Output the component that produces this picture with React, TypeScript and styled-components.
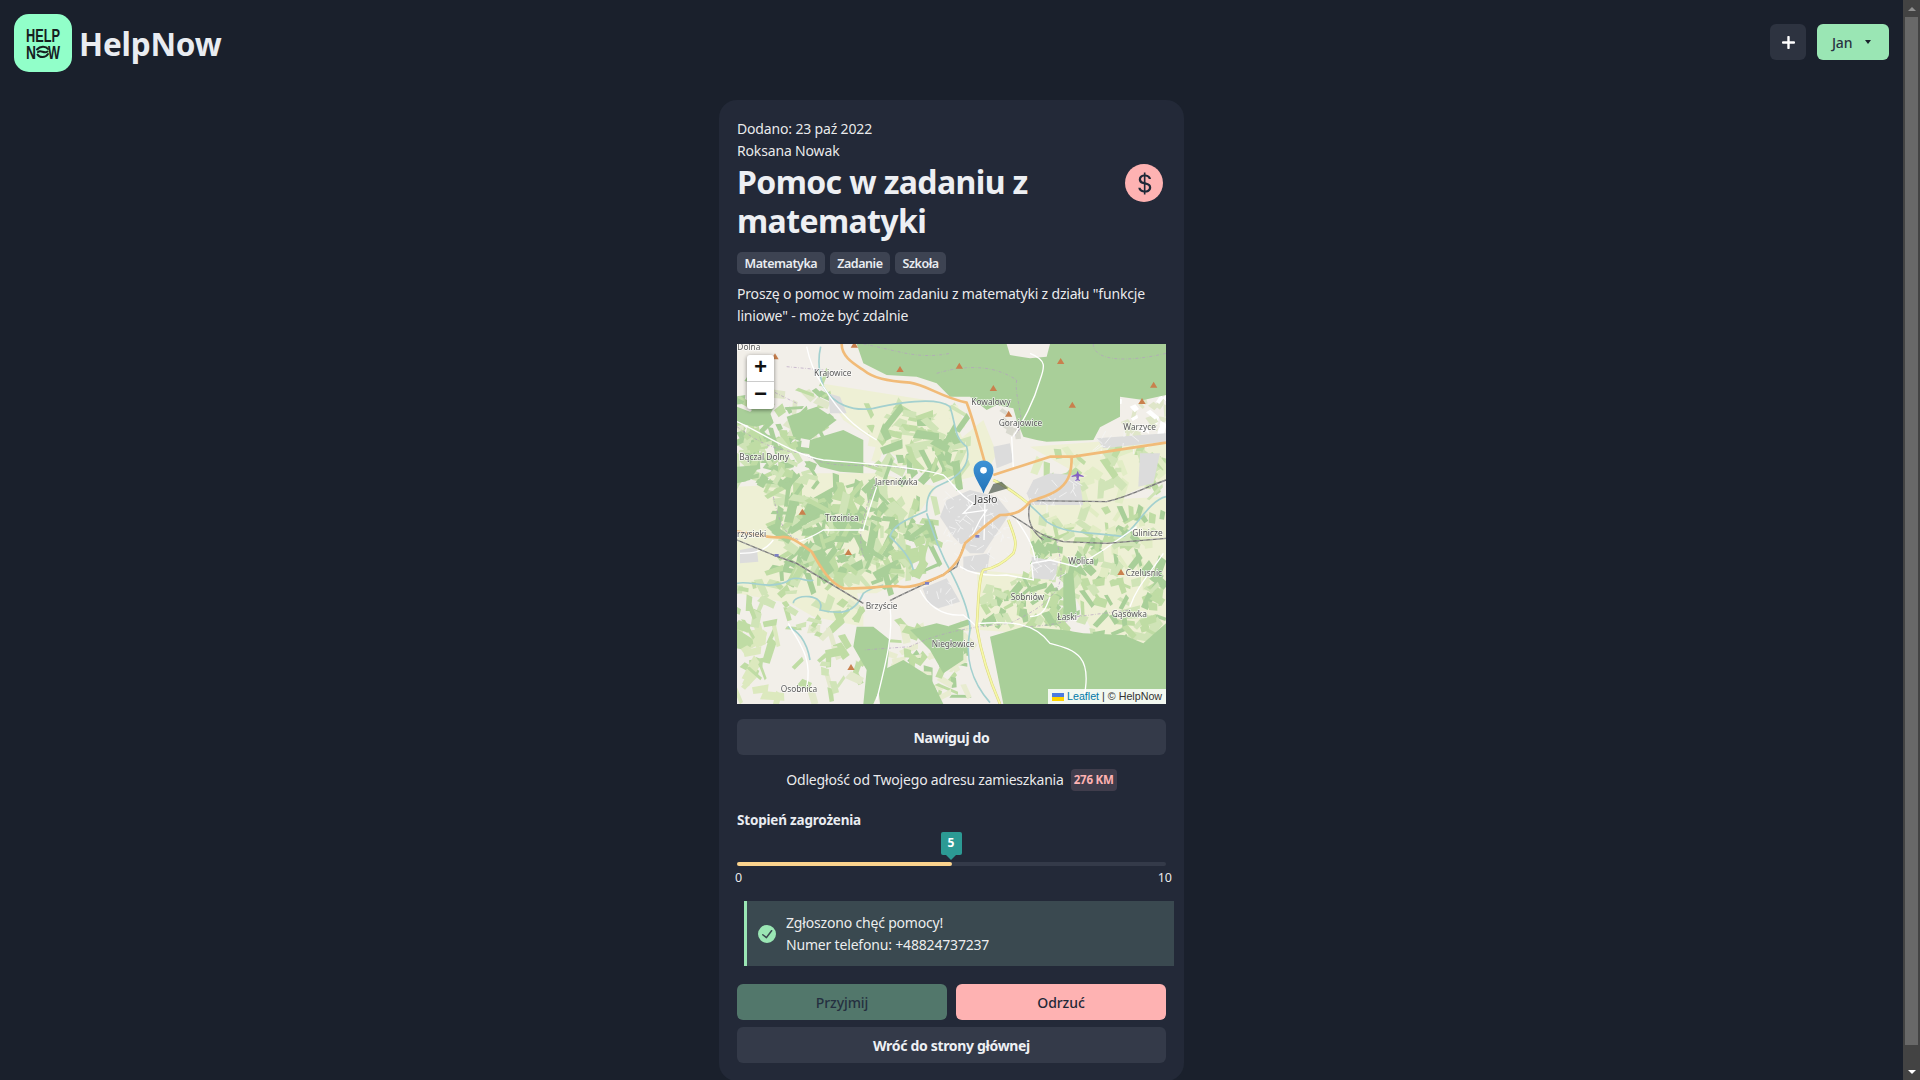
import React, { useMemo } from "react";
import styled, { createGlobalStyle } from "styled-components";
import { BsCurrencyDollar } from "react-icons/bs";

const FONT = `"Noto Sans", "Open Sans", sans-serif`;

const Global = createGlobalStyle`
  html, body { margin: 0; height: 100%; overflow: hidden; background: #1a202c; }
  body { color: rgba(255,255,255,.92); font-family: ${FONT}; font-size: 14px; line-height: 22px; }
`;

const Shell = styled.div`display: flex; height: 100vh; overflow: hidden;`;
const Page = styled.div`flex: 1; min-width: 0; display: block;`;
const ScrollTrack = styled.div`flex: none; width: 17px; height: 100%; background: #434343; display: flex; flex-direction: column; align-items: center;`;
const ScrollArrow = styled.div`flex: none; height: 17px; display: flex; align-items: center; justify-content: center;`;
const UpArrow = styled.span`width: 0; height: 0; border-left: 4px solid transparent; border-right: 4px solid transparent; border-bottom: 4px solid #8f8f8f;`;
const DownArrow = styled.span`width: 0; height: 0; border-left: 4px solid transparent; border-right: 4px solid transparent; border-top: 4px solid #fff;`;
const ScrollThumb = styled.div`flex: none; width: 13px; height: 1028px; background: #686868;`;
const ScrollRest = styled.div`flex: 1;`;

const Header = styled.header`display: flex; align-items: center; justify-content: space-between; height: 86px; padding: 0 14px; box-sizing: border-box;`;
const Brand = styled.div`display: flex; align-items: center; gap: 7px;`;
const BrandName = styled.div`font-size: 31.5px; font-weight: 700; line-height: 40px; color: #e9ecf1; padding-top: 2px; letter-spacing: -0.2px;`;
const Actions = styled.div`display: flex; gap: 11px; margin-top: -2px;`;
const IconButton = styled.button`width: 36px; height: 36px; border: 0; border-radius: 6px; background: #2d3340; color: #fff; display: flex; align-items: center; justify-content: center; padding: 0;`;
const MenuButton = styled.button`width: 72px; height: 36px; border: 0; border-radius: 6px; background: #9ae6b4; color: #2a3342; font: 500 14px ${FONT}; letter-spacing: -0.2px; display: flex; align-items: center; gap: 13px; padding: 0 0 0 15px;`;
const Caret = styled.span`width: 0; height: 0; border-left: 3.5px solid transparent; border-right: 3.5px solid transparent; border-top: 4px solid #1a202c;`;
const Main = styled.main`display: flex; justify-content: center; padding: 14px 0 18px;`;
const Card = styled.section`width: 465px; box-sizing: border-box; background: #232938; border-radius: 18px; padding: 18px;`;
const Line = styled.div`height: 22px; white-space: nowrap; letter-spacing: -0.16px;`;
const TitleRow = styled.div`display: flex; justify-content: space-between; align-items: flex-start; padding-right: 3px;`;
const Title = styled.h1`margin: 0; width: 330px; font-size: 32px; line-height: 39px; font-weight: 700; color: #edeff3; letter-spacing: -0.62px;`;
const MoneyBadge = styled.div`width: 38px; height: 38px; margin-top: 2px; border-radius: 50%; background: #feb2b2; color: #1f2837; display: flex; align-items: center; justify-content: center; font-size: 25px;`;
const Tags = styled.div`display: flex; gap: 5px; margin-top: 12px;`;
const Tag = styled.span`height: 22px; padding: 0 7.5px; border-radius: 5px; background: #3d4352; color: #e9ecf1; font-size: 12.5px; font-weight: 600; line-height: 23px; letter-spacing: -0.45px;`;
const Description = styled.p`margin: 9px 0 0; letter-spacing: -0.18px;`;
const MapBox = styled.div`position: relative; height: 360px; margin-top: 17px; overflow: hidden; background: #f2efe9;`;
const MapArt = styled.svg`display: block; width: 429px; height: 360px;`;
const Zoom = styled.div`position: absolute; left: 10px; top: 11px; width: 27px; background: #fff; border-radius: 3px; box-shadow: 0 1px 4px rgba(0,0,0,.45); overflow: hidden;`;
const ZoomBtn = styled.div`height: 27px; box-sizing: border-box; display: flex; align-items: center; justify-content: center; color: #111; font: 700 22px "Liberation Mono", monospace; &:first-child { border-bottom: 1px solid #ccc; }`;
const Attribution = styled.div`position: absolute; right: 0; bottom: 0; height: 15px; width: 118px; box-sizing: border-box; background: rgba(255,255,255,.85); color: #333; font: 10.7px/15px "Liberation Sans", Arial, sans-serif; padding-left: 4px; display: flex; align-items: center; gap: 3px; white-space: nowrap;`;
const AttrLink = styled.span`color: #0078a8;`;
const Pin = styled.svg`position: absolute; left: 236px; top: 116px; width: 21px; height: 34px;`;
const GhostButton = styled.button<{ $mt: number }>`display: block; width: 100%; height: 36px; margin-top: ${(p) => p.$mt}px; border: 0; border-radius: 6px; background: #343a49; color: #eef0f4; font: 700 14px ${FONT}; letter-spacing: -0.32px;`;
const Distance = styled.div`display: flex; justify-content: center; align-items: center; gap: 7px; height: 22px; margin-top: 14px; letter-spacing: -0.2px;`;
const KmBadge = styled.span`height: 22px; width: 46px; text-align: center; border-radius: 4px; background: #403d4c; color: #feb2b2; font-size: 11.5px; font-weight: 700; letter-spacing: -0.2px;`;
const Label = styled.div`margin-top: 18px; font-weight: 700; font-size: 13.5px; color: #e9ecf1; letter-spacing: -0.2px;`;
const Slider = styled.div`position: relative; margin-top: 31px; height: 4px; border-radius: 2px; background: #343a49;`;
const SliderFill = styled.div`height: 100%; border-radius: 2px; background: #fbd38d;`;
const Bubble = styled.div`position: absolute; left: 50%; top: -30px; width: 21px; height: 23px; margin-left: -11px; background: #2c9a94; border-radius: 2px; color: #fff; text-align: center; font-size: 12px; font-weight: 700; line-height: 22px;
  &::after { content: ""; position: absolute; left: 5px; top: 23px; border: 5px solid transparent; border-top: 5px solid #2c9a94; border-bottom: 0; }`;
const Scale = styled.div`display: flex; justify-content: space-between; margin: 4px -6px 0 -2px; height: 16px; font-size: 12.5px; line-height: 16px;`;
const Alert = styled.div`display: flex; align-items: center; gap: 10px; width: 430px; box-sizing: border-box; height: 65px; margin: 15px 0 0 7px; padding-left: 11px; border-left: 3px solid #9ae6b4; background: #3a4950;`;
const AlertIcon = styled.svg`width: 18px; height: 18px; flex: none; color: #9ae6b4;`;
const AlertText = styled.div`letter-spacing: -0.18px;`;
const ButtonRow = styled.div`display: grid; grid-template-columns: 1fr 1fr; gap: 9px; margin-top: 18px;`;
const Accept = styled.button`height: 36px; border: 0; border-radius: 6px; background: #52776b; color: #253040; font: 500 14px ${FONT}; letter-spacing: -0.1px;`;
const Reject = styled.button`height: 36px; border: 0; border-radius: 6px; background: #feb2b2; color: #1f2837; font: 500 14px ${FONT}; letter-spacing: -0.1px;`;

const LogoMark = () => (
  <svg width="58" height="58" viewBox="0 0 58 58">
    <rect width="58" height="58" rx="15" fill="#91ffc9" />
    <text x="12" y="27.5" fontFamily="Liberation Sans, sans-serif" fontWeight="700" fontSize="19" textLength="34" lengthAdjust="spacingAndGlyphs" fill="#16201f">HELP</text>
    <text x="12" y="44.5" fontFamily="Liberation Sans, sans-serif" fontWeight="700" fontSize="19" textLength="10" lengthAdjust="spacingAndGlyphs" fill="#16201f">N</text>
    <text x="34" y="44.5" fontFamily="Liberation Sans, sans-serif" fontWeight="700" fontSize="19" textLength="12" lengthAdjust="spacingAndGlyphs" fill="#16201f">W</text>
    <path d="M23 35.5c3-3.500 9-3.500 11-.5M23.5 40.5c2 3.500 8 3.500 10.500-.5M24 38c3-2.500 6 2 9.500-.5" fill="none" stroke="#16201f" strokeWidth="2" strokeLinecap="round" />
  </svg>
);

function rng(seed: number) {
  let s = seed;
  return () => {
    s = (s * 16807) % 2147483647;
    return (s - 1) / 2147483646;
  };
}

type Field = { d: string; fill: string };
function fields(x0: number, y0: number, x1: number, y1: number, n: number, seed: number, palette: string[], lo = 12, hi = 46): Field[] {
  const r = rng(seed);
  const out: Field[] = [];
  for (let i = 0; i < n; i++) {
    const cx = x0 + r() * (x1 - x0);
    const cy = y0 + r() * (y1 - y0);
    const a = r() * Math.PI;
    const l = lo + r() * (hi - lo);
    const w = 5 + r() * 11;
    const ux = Math.cos(a), uy = Math.sin(a);
    const p = [
      [cx - ux * l - uy * w, cy - uy * l + ux * w],
      [cx + ux * l - uy * w * 0.6, cy + uy * l + ux * w * 0.6],
      [cx + ux * l * 0.9 + uy * w, cy + uy * l * 0.9 - ux * w],
      [cx - ux * l * 0.8 + uy * w * 0.8, cy - uy * l * 0.8 - ux * w * 0.8],
    ];
    out.push({ d: "M" + p.map((q) => q[0].toFixed(0) + "," + q[1].toFixed(0)).join("L") + "Z", fill: palette[Math.floor(r() * palette.length)] });
  }
  return out;
}

function streets(x0: number, y0: number, x1: number, y1: number, n: number, seed: number): string {
  const r = rng(seed);
  let d = "";
  for (let i = 0; i < n; i++) {
    const x = x0 + r() * (x1 - x0), y = y0 + r() * (y1 - y0);
    d += `M${x.toFixed(0)},${y.toFixed(0)}l${(r() * 50 - 25).toFixed(0)},${(r() * 50 - 25).toFixed(0)}`;
  }
  return d;
}

const G = "#a9cf99", G2 = "#bfdca4", F = "#eef0d5", M = "#d0e4b7";

const forests = [
  "M380,12L1308,12L1308,165L1240,180L1170,170L1170,230L1110,262L1090,300L950,305L920,300L880,290L860,240L850,205L800,195L770,210L720,170L660,170L620,130L560,110L470,105L400,70Z",
  "M240,300L340,270L400,300L400,400L330,395L270,380L235,340Z",
  "M780,890L880,860L1000,870L1060,880L1180,885L1240,910L1308,850L1308,1092L820,1092Z",
  "M380,860L430,860L480,900L470,1000L430,1092L400,1092L410,990L370,920Z",
  "M21,200L60,215L110,190L130,245L80,260L21,250Z",
  "M21,380L90,375L60,420L21,430Z",
  "M540,870L620,850L700,870L700,960L640,1000L600,930Z",
  "M170,230L260,200L320,240L240,300L190,290Z",
  "M440,1000L520,960L600,1010L640,1092L450,1092Z",
  "M1000,700L1030,700L1040,820L1000,840Z",
];
const farms = [
  "M21,440L240,430L300,760L400,800L400,860L250,830L180,790L21,760Z",
  "M270,130L650,190L700,300L710,400L620,420L540,380L430,300L340,240Z",
  "M120,400L440,400L620,440L540,560L520,640L550,700L440,760L320,760L240,660L150,600Z",
  "M900,320L1308,290L1308,420L1240,440L1130,490L1060,490L1040,400Z",
  "M900,490L1308,470L1308,740L1180,820L1000,720L900,640Z",
  "M740,690L960,710L1000,880L880,880L750,870Z",
  "M240,720L380,750L390,810L300,800Z",
  "M1020,740L1308,700L1308,860L1240,920L1100,900Z",
  "M640,340L760,240L800,340L770,400L650,430Z",
];
const greys = [
  "M650,480L720,450L800,470L840,520L800,580L760,640L720,640L670,590L630,530Z",
  "M578,745L650,715L690,785L625,805L595,790Z",
  "M910,420L960,400L1030,405L1050,430L1060,495L905,495L890,460Z",
  "M1100,295L1308,280L1308,305L1120,325Z",
  "M1230,340L1290,340L1270,430L1225,440Z",
  "M790,320L840,310L850,365L800,385Z",
  "M905,650L985,665L975,720L905,715Z",
  "M300,220L350,220L330,170L295,160Z",
  "M30,630L80,620L85,665L30,670Z",
  "M700,650L780,640L770,700L700,690Z",
];
const whiteRoads = [
  "M21,245C100,280 180,340 280,360C400,370 560,380 640,405C670,430 680,460 730,490L700,520L770,510L750,540L720,600",
  "M765,480L762,600",
  "M845,290L850,385M850,290C880,240 910,190 930,120C945,80 950,60 900,40",
  "M280,140C330,220 370,260 440,300",
  "M440,440C420,500 400,560 400,570L280,570C240,595 220,600 205,605",
  "M690,680C720,700 760,710 830,705L910,720L905,670L960,660L1040,680L1120,630L1220,560",
  "M570,750C590,790 630,830 700,825C720,840 730,850 740,860",
  "M175,850C200,900 250,950 230,1040",
  "M480,800C490,880 470,960 440,1080",
  "M740,850C800,850 900,830 960,910C1040,930 1090,950 1060,1080",
  "M960,770C950,800 940,830 900,830M1300,640C1260,700 1220,740 1200,800",
  "M860,540C880,570 910,610 915,660",
  "M130,600C100,640 60,640 30,640",
  "M230,20C240,70 260,110 280,140",
];
const admin = [
  "M21,260C90,310 130,330 220,340C300,400 420,360 540,390M430,440C400,540 380,570 400,650",
  "M130,470C150,560 170,590 210,600",
  "M620,100C720,70 800,80 860,120M860,120C850,180 900,250 850,290",
  "M400,12C500,30 560,60 660,40M1090,12C1090,60 1180,70 1308,40",
  "M980,600C1000,690 1000,740 960,770C940,800 880,830 840,850C720,860 620,880 540,920L400,930",
  "M1040,830L1200,810M880,860C960,860 1040,840 1060,820",
  "M170,80L280,90M60,120L200,190",
];
const rivers = [
  "M272,20C260,70 270,110 280,140C310,195 370,215 430,205C520,185 620,170 660,200C680,260 670,290 710,320C725,370 690,410 630,435C590,450 590,490 590,512C540,535 490,550 480,590C510,620 540,650 550,690",
  "M590,520C610,580 630,640 670,710C700,770 720,830 720,870C705,950 720,1020 780,1088",
  "M800,422C850,450 910,500 950,545C1010,585 1080,575 1180,590C1220,560 1260,480 1308,470",
  "M21,730C60,720 110,750 170,725C200,700 230,730 250,720",
  "M190,790C190,760 290,760 270,810C320,820 370,830 400,760C420,745 440,740 460,735",
  "M175,860C200,870 230,900 240,960",
];
const peaks: number[][] = [[373,15],[135,50],[510,88],[688,78],[790,145],[992,64],[1271,135],[1236,184],[1027,195],[836,222],[217,516],[355,637],[1173,697],[363,982]];
const labels: [number, number, string][] = [
  [22, 30, "Dolna"], [252, 108, "Krajowice"], [724, 194, "Kowalowy"], [806, 258, "Gorajowice"], [1180, 271, "Warzyce"],
  [28, 360, "Bączal Dolny"], [435, 436, "Jareniówka"], [285, 544, "Trzcinica"], [21, 590, "rzysieki"], [1207, 587, "Glinicze"],
  [1015, 672, "Wolica"], [1187, 707, "Czelusnic"], [842, 781, "Sobniów"], [982, 839, "Łaski"], [1145, 830, "Gąsówka"],
  [407, 808, "Brzyście"], [605, 921, "Niegłowice"], [152, 1056, "Osobnica"],
];
const YELLOW = "M790,420C830,440 870,470 900,495M835,540C850,580 865,610 850,640C820,670 790,685 760,690C745,710 745,800 740,860C750,920 770,1000 810,1092";
const RAIL = "M21,600L130,645L200,670L400,790M480,782C540,750 620,720 680,680L700,620M840,525C880,540 920,590 1000,605L1130,610L1308,595M900,490C890,530 900,570 940,600M905,482L1130,485C1200,470 1250,440 1308,420";

const TerrainMap = () => {
  const patches = useMemo(() => {
    const g = [G, G, G2, M];
    return [
      ...fields(130, 430, 500, 730, 190, 11, g),
      ...fields(420, 210, 700, 420, 100, 23, [G2, M, G, F]),
      ...fields(21, 270, 250, 440, 70, 37, [G, G2, M], 10, 34),
      ...fields(21, 110, 300, 290, 46, 41, [G2, "#dfe6c9", G], 10, 30),
      ...fields(500, 470, 620, 700, 40, 53, [G, G2, M]),
      ...fields(910, 510, 1300, 730, 100, 67, [M, G2, "#e1ecc4", G], 10, 34),
      ...fields(920, 330, 1300, 470, 46, 71, [M, "#e2edc6", G2], 10, 40),
      ...fields(760, 710, 1000, 860, 70, 83, [G, G2, M], 10, 30),
      ...fields(1000, 720, 1300, 900, 60, 97, [G2, G, M], 10, 36),
      ...fields(1170, 170, 1308, 290, 30, 101, ["#f2efe9", "#ffffff", "#dfe6c9"], 10, 26),
      ...fields(21, 860, 140, 1090, 26, 113, [G2, "#dce9be"], 14, 40),
      ...fields(480, 850, 720, 1090, 60, 127, [G, G2, "#e8ecd0"], 12, 40),
      ...fields(190, 780, 400, 1080, 40, 139, ["#e3e9cc", G2, M], 10, 30),
      ...fields(820, 200, 900, 300, 12, 149, ["#d9d9cf", "#f2efe9"], 8, 20),
      ...fields(21, 720, 200, 860, 22, 157, [G2, M], 10, 28),
    ];
  }, []);
  const town = useMemo(() => streets(640, 460, 840, 690, 70, 5) + streets(580, 720, 690, 800, 10, 9) + streets(900, 410, 1060, 500, 18, 13) + streets(1100, 285, 1300, 330, 14, 17) + streets(905, 650, 985, 720, 14, 19), []);
  return (
    <MapArt viewBox="21 12 1287 1080" preserveAspectRatio="none">
      <defs>
        <filter id="tile" x="0" y="0" width="100%" height="100%"><feGaussianBlur stdDeviation="1.7" /></filter>
        <filter id="soft" x="-50%" y="-50%" width="200%" height="200%"><feGaussianBlur stdDeviation="0.7" /></filter>
      </defs>
      <g filter="url(#tile)">
        <rect x="21" y="12" width="1287" height="1080" fill="#f2efe9" />
        {farms.map((d, i) => <path key={i} d={d} fill={F} />)}
        {patches.map((p, i) => <path key={i} d={p.d} fill={p.fill} />)}
        {forests.map((d, i) => <path key={i} d={d} fill={G} />)}
        <path d="M830,12L960,12L950,50L900,55L840,45Z" fill="#f2efe9" />
        {greys.map((d, i) => <path key={i} d={d} fill="#dcdcdc" />)}
        <path d={town} stroke="#f4f4f4" strokeWidth="2.500" fill="none" />
        <g fill="none" stroke="#b39fc0" strokeWidth="2" strokeDasharray="9 5 2 5">{admin.map((d, i) => <path key={i} d={d} />)}</g>
        <g fill="none" stroke="#a3d0cf" strokeWidth="5">{rivers.map((d, i) => <path key={i} d={d} />)}</g>
        <g fill="none" stroke="#fff" strokeWidth="4">{whiteRoads.map((d, i) => <path key={i} d={d} />)}</g>
        <g fill="none" strokeLinejoin="round">
          <path d={YELLOW} stroke="#d9d77f" strokeWidth="8" />
          <path d={YELLOW} stroke="#f6f8a8" strokeWidth="5" />
          <path d={RAIL} stroke="#777" strokeWidth="4" />
          <path d={RAIL} stroke="#ddd" strokeWidth="1.500" strokeDasharray="10 10" />
          <g stroke="#f1bb78" strokeWidth="8">
            <path d="M335,12C335,50 370,70 400,90C430,115 470,122 540,128C590,135 630,170 710,188C730,240 745,300 765,370" />
            <path d="M790,405L960,350L1030,350L1308,308" />
            <path d="M1025,350C1025,390 1020,420 990,445C960,470 920,475 900,485C880,510 860,525 810,525C770,550 730,590 705,610C695,640 690,665 640,705C590,725 540,750 500,738C440,740 380,748 340,745C300,730 270,680 245,635C210,610 180,585 150,592C110,595 60,580 21,575" />
          </g>
        </g>
        <g fill="#7d7fc4"><rect x="134" y="642" width="12" height="8" /><rect x="585" y="726" width="12" height="8" /><rect x="736" y="585" width="12" height="8" /></g>
        <g fill="#c9804e">{peaks.map(([x, y], i) => <path key={i} d={`M${x},${y - 10}l11,18h-22Z`} />)}</g>
        <path d="M1043,392l4,10l14,6v3l-14,-2l-1,9l4,3v2l-7,-2l-7,2v-2l4,-3l-1,-9l-14,2v-3l14,-6Z" fill="#8461c4" />
        <path d="M790,432L815,425L835,445L775,462Z" fill="#4d5a4c" opacity=".7" />
      </g>
      <g filter="url(#soft)" fontFamily="Noto Sans, sans-serif" fontSize="25" fill="#5a5a5a" stroke="#fff" strokeOpacity=".75" strokeWidth="4" paintOrder="stroke">
        {labels.map(([x, y, t]) => <text key={t} x={x} y={y}>{t}</text>)}
        <text x="733" y="490" fontSize="32" fill="#444">Jasło</text>
      </g>
    </MapArt>
  );
};

const CheckCircle = () => (
  <AlertIcon viewBox="0 0 24 24">
    <path fill="currentColor" d="M12,0A12,12,0,1,0,24,12,12.014,12.014,0,0,0,12,0Zm6.927,8.2-6.845,9.289a1.011,1.011,0,0,1-1.43.188L5.764,13.769a1,1,0,1,1,1.25-1.562l4.076,3.261,6.227-8.451A1,1,0,1,1,18.927,8.2Z" />
  </AlertIcon>
);

export default function App() {
  return (
    <Shell>
      <Global />
      <Page>
        <Header>
          <Brand>
            <LogoMark />
            <BrandName>HelpNow</BrandName>
          </Brand>
          <Actions>
            <IconButton aria-label="Dodaj">
              <svg width="13" height="13" viewBox="0 0 13 13"><path d="M6.500 1v11M1 6.500h11" stroke="#fff" strokeWidth="2.400" strokeLinecap="round" /></svg>
            </IconButton>
            <MenuButton>Jan<Caret /></MenuButton>
          </Actions>
        </Header>
        <Main>
          <Card>
            <Line>Dodano: 23 paź 2022</Line>
            <Line>Roksana Nowak</Line>
            <TitleRow>
              <Title>Pomoc w zadaniu z matematyki</Title>
              <MoneyBadge><BsCurrencyDollar /></MoneyBadge>
            </TitleRow>
            <Tags>
              <Tag>Matematyka</Tag>
              <Tag>Zadanie</Tag>
              <Tag>Szkoła</Tag>
            </Tags>
            <Description>Proszę o pomoc w moim zadaniu z matematyki z działu "funkcje liniowe" - może być zdalnie</Description>
            <MapBox>
              <TerrainMap />
              <Pin viewBox="0 0 25 41">
                <defs>
                  <linearGradient id="pin" x1="0" y1="0" x2="0" y2="1"><stop offset="0" stopColor="#3f93d6" /><stop offset="1" stopColor="#2273b8" /></linearGradient>
                </defs>
                <path d="M12.500 0.500C5.800 0.500 0.500 5.800 0.500 12.500C0.500 21 10 32 12.500 40.500C15 32 24.500 21 24.500 12.500C24.500 5.800 19.200 0.500 12.500 0.500Z" fill="url(#pin)" />
                <circle cx="12.500" cy="12.500" r="4" fill="#fff" />
              </Pin>
              <Zoom>
                <ZoomBtn>+</ZoomBtn>
                <ZoomBtn>−</ZoomBtn>
              </Zoom>
              <Attribution>
                <svg width="12" height="8" viewBox="0 0 12 8"><rect width="12" height="4" fill="#4c7be1" /><rect y="4" width="12" height="4" fill="#ffd500" /></svg>
                <AttrLink>Leaflet</AttrLink> | © HelpNow
              </Attribution>
            </MapBox>
            <GhostButton $mt={15}>Nawiguj do</GhostButton>
            <Distance>
              Odległość od Twojego adresu zamieszkania
              <KmBadge>276 KM</KmBadge>
            </Distance>
            <Label>Stopień zagrożenia</Label>
            <Slider>
              <SliderFill style={{ width: "50%" }} />
              <Bubble>5</Bubble>
            </Slider>
            <Scale><span>0</span><span>10</span></Scale>
            <Alert>
              <CheckCircle />
              <AlertText>
                Zgłoszono chęć pomocy!<br />
                Numer telefonu: +48824737237
              </AlertText>
            </Alert>
            <ButtonRow>
              <Accept disabled>Przyjmij</Accept>
              <Reject>Odrzuć</Reject>
            </ButtonRow>
            <GhostButton $mt={7}>Wróć do strony głównej</GhostButton>
          </Card>
        </Main>
      </Page>
      <ScrollTrack>
        <ScrollArrow><UpArrow /></ScrollArrow>
        <ScrollThumb />
        <ScrollRest />
        <ScrollArrow><DownArrow /></ScrollArrow>
      </ScrollTrack>
    </Shell>
  );
}
